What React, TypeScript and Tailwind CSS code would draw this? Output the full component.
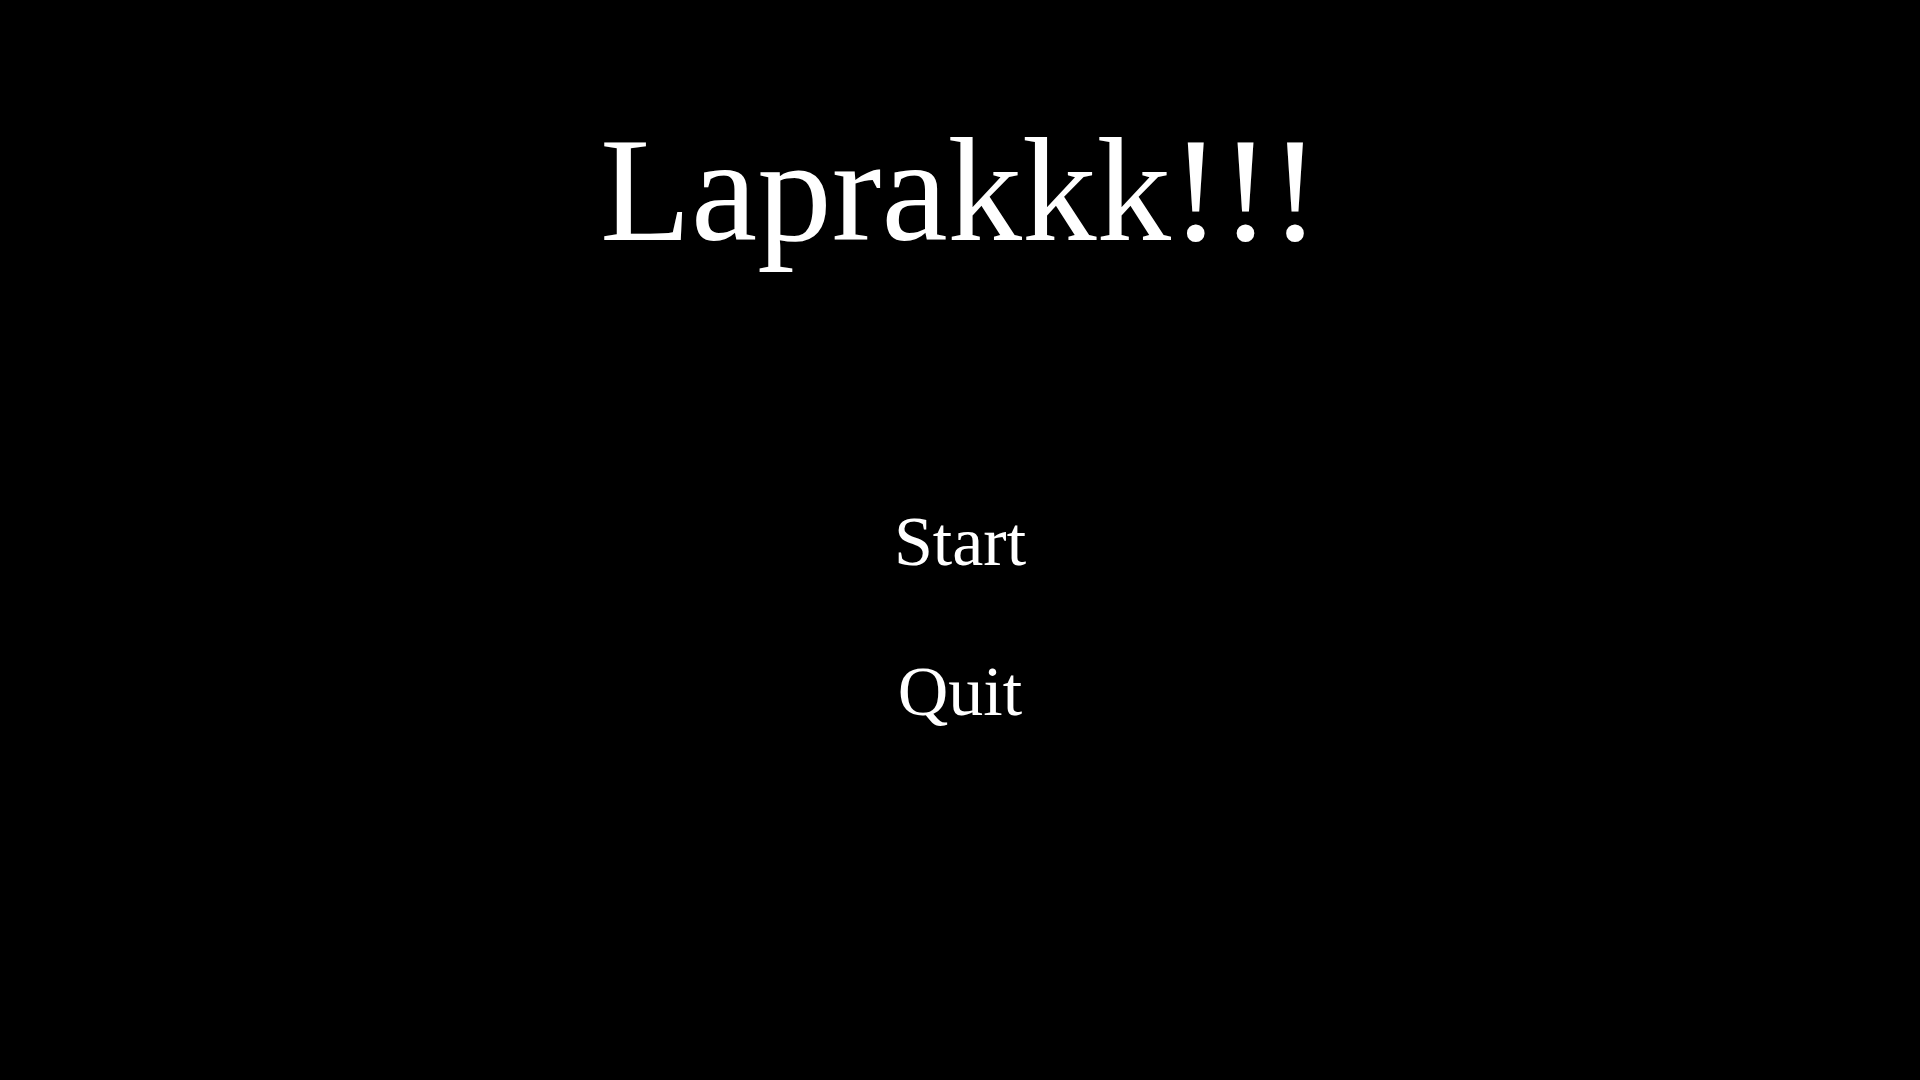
import React from "react";

export default function App() {
  return (
    <div
      className="flex h-[1080px] w-full flex-col items-center bg-black pt-[115px] text-white"
      style={{ fontFamily: '"Liberation Serif", "Times New Roman", serif' }}
    >
      <h1 className="text-[149px] leading-none font-normal">Laprakkk!!!</h1>
      <button className="mt-[243px] text-[70px] leading-none">Start</button>
      <button className="mt-[80px] text-[70px] leading-none">Quit</button>
    </div>
  );
}
